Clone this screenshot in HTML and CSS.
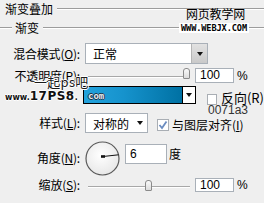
FILE: index.html
```html
<!DOCTYPE html>
<html>
<head>
<meta charset="utf-8">
<link rel="stylesheet" href="styles.css">
</head>
<body>
<div class="panel">
  <div class="title"><span class="title-text">渐变叠加</span><span class="rule"></span></div>
  <div class="legend"><span class="rule lead"></span><span class="legend-text">渐变</span><span class="rule"></span></div>

  <div class="row r-blend">
    <span class="label">混合模式(<u>O</u>):</span>
    <div class="select blend-select"><span class="select-val">正常</span><span class="drop gray"><span class="tri"></span></span></div>
  </div>

  <div class="row r-opacity">
    <span class="label">不透明度(<u>P</u>):</span>
    <div class="slider op-slider"><span class="track"></span><span class="thumb" style="left:95px"></span></div>
    <span class="num">100</span><span class="unit">%</span>
  </div>

  <div class="row r-grad">
    <span class="label"></span>
    <div class="gradbox"><span class="grad"></span><span class="drop white"><span class="tri"></span></span></div>
    <span class="check"></span><span class="ctext">反向(R)</span>
  </div>

  <div class="row r-style">
    <span class="label">样式(<u>L</u>):</span>
    <div class="select style-select"><span class="select-val">对称的</span><span class="drop plain"><span class="tri"></span></span></div>
    <span class="check checked"><svg width="10" height="10" viewBox="0 0 10 10"><path d="M1.5 5 L4 8 L8.5 1.5" fill="none" stroke="#6b8cc0" stroke-width="1.8"/></svg></span>
    <span class="ctext">与图层对齐(<u>I</u>)</span>
  </div>

  <div class="row r-angle">
    <span class="label">角度(<u>N</u>):</span>
    <svg class="dial" width="35" height="35" viewBox="0 0 35 35">
      <defs><radialGradient id="dg" cx="0.45" cy="0.4" r="0.7"><stop offset="0" stop-color="#ffffff"/><stop offset="1" stop-color="#e4e4e4"/></radialGradient></defs>
      <circle cx="17.5" cy="17.5" r="16.5" fill="url(#dg)" stroke="#5a5a5a" stroke-width="1.2"/>
      <line x1="18" y1="15.5" x2="33.5" y2="13.8" stroke="#111" stroke-width="1"/>
      <rect x="16" y="14.2" width="4" height="2.6" fill="#111"/>
    </svg>
    <span class="num angle-num">6</span><span class="unit deg">度</span>
  </div>

  <div class="row r-scale">
    <span class="label">缩放(<u>S</u>):</span>
    <div class="slider sc-slider"><span class="track"></span><span class="thumb" style="left:57px"></span></div>
    <span class="num">100</span><span class="unit">%</span>
  </div>

  <div class="wm wm-site">网页教学网</div>
  <div class="wm wm-url">WWW.WEBJX.COM</div>
  <div class="wm wm-ps">一起ps吧</div>
  <div class="wm wm-17"><span class="small">www.</span><span class="big">17PS8</span><span class="small">.</span></div>
  <div class="wm wm-com">com</div>
  <div class="wm wm-hex">0071a3</div>
</div>
</body>
</html>
```

FILE: styles.css
```css
html, body {
  margin: 0;
  padding: 0;
}
body {
  width: 264px;
  height: 203px;
  overflow: hidden;
  background: #efefef;
  font-family: "Noto Sans CJK SC", "DejaVu Sans", sans-serif;
  font-size: 12px;
  line-height: 14px;
  color: #000;
}
.panel {
  position: relative;
  width: 264px;
  height: 203px;
}
u { text-decoration: underline; text-underline-offset: 1px; }

.title {
  display: flex;
  align-items: center;
  height: 18px;
  padding-left: 5px;
}
.title-text { margin-right: 4px; }
.rule {
  flex: 1;
  height: 0;
  border-top: 1px solid #9c9c9c;
  border-bottom: 1px solid #ffffff;
}
.rule.lead { flex: 0 0 12px; }
.legend {
  display: flex;
  align-items: center;
  height: 18px;
  margin-top: 1px;
}
.legend-text { margin: 0 4px 0 3px; }

.row {
  display: flex;
  align-items: center;
}
.label {
  flex: 0 0 80px;
  text-align: right;
  white-space: nowrap;
  letter-spacing: -0.2px;
}
.r-blend { height: 21px; margin-top: 6px; }
.r-opacity { height: 15px; margin-top: 4px; }
.r-grad { height: 18px; margin-top: 3px; }
.r-style { height: 20px; margin-top: 9px; }
.r-angle { height: 34px; margin-top: 8px; }
.r-scale { height: 14px; margin-top: 3px; }

.select {
  display: flex;
  height: 100%;
  margin-left: 5px;
  background: #fff;
  border: 1px solid #a9b0b8;
  box-sizing: border-box;
}
.select-val {
  flex: 1;
  padding-left: 7px;
  line-height: 19px;
}
.blend-select { width: 123px; }
.style-select { width: 63px; }
.drop {
  flex: 0 0 15px;
  display: flex;
  align-items: center;
  justify-content: center;
}
.drop.gray {
  background: linear-gradient(#e2e2e2, #c9c9c9);
  border-left: 1px solid #b5b5b5;
}
.drop.plain { background: #fff; }
.drop.white {
  flex: 0 0 12px;
  background: #fff;
  border-left: 1px solid #000;
}
.tri {
  width: 0;
  height: 0;
  border-left: 3px solid transparent;
  border-right: 3px solid transparent;
  border-top: 4px solid #111;
}

.slider {
  position: relative;
  height: 100%;
  margin-left: 8px;
  width: 104px;
}
.track {
  position: absolute;
  left: 0;
  right: 2px;
  top: 8px;
  height: 1px;
  background: #a8a8a8;
  border-bottom: 1px solid #fff;
}
.thumb {
  position: absolute;
  top: 0;
  width: 7px;
  height: 11px;
  box-sizing: border-box;
  border: 1px solid #8a8a8a;
  border-radius: 3px 3px 1px 1px;
  background: linear-gradient(#fafafa, #dcdcdc);
}
.sc-slider .track { top: 8px; }
.sc-slider .thumb { top: 2px; }

.num {
  box-sizing: border-box;
  width: 39px;
  height: 15px;
  margin-left: 3px;
  background: #fff;
  border: 1px solid #a9b0b8;
  padding-left: 4px;
  line-height: 13px;
  font-family: "Liberation Sans", sans-serif;
  font-size: 12px;
}
.r-scale .num { height: 14px; line-height: 12px; }
.unit {
  margin-left: 3px;
  font-family: "Liberation Sans", sans-serif;
}

.gradbox {
  display: flex;
  margin-left: 3px;
  width: 124px;
  height: 18px;
  box-sizing: border-box;
  border: 1px solid #000;
}
.grad {
  flex: 1;
  background: linear-gradient(90deg, #23a2dc 0%, #1693cd 40%, #0071a3 100%);
}
.check {
  box-sizing: border-box;
  width: 11px;
  height: 11px;
  background: #fff;
  border: 1px solid #a9aeb4;
  display: flex;
  align-items: center;
  justify-content: center;
}
.r-grad .check { margin-left: 11px; margin-top: 9px; }
.r-grad .ctext { margin-left: 4px; margin-top: 6px; white-space: nowrap; font-size: 13px; }
.r-style .check { margin-left: 9px; width: 12px; height: 12px; margin-top: 4px; }
.r-style .ctext { margin-left: 3px; margin-top: 4px; white-space: nowrap; }

.dial { margin-left: 5px; }
.angle-num {
  height: 20px;
  width: 42px;
  margin-left: 5px;
  margin-top: -9px;
  line-height: 18px;
}
.deg { margin-left: 2px; margin-top: -9px; font-family: "Noto Sans CJK SC", sans-serif; }

.wm {
  position: absolute;
  white-space: nowrap;
}
.wm-site {
  left: 186px;
  top: 6px;
  font-size: 12px;
  line-height: 16px;
  letter-spacing: -0.2px;
}
.wm-url {
  left: 179px;
  top: 23px;
  padding: 0 2px;
  background: #fff;
  font-family: "DejaVu Sans Mono", monospace;
  font-weight: bold;
  font-size: 8.6px;
  line-height: 10px;
  letter-spacing: -0.1px;
}
.wm-ps {
  left: 34px;
  top: 74px;
  font-size: 13px;
  line-height: 15px;
  color: #1a1a1a;
  letter-spacing: 0.3px;
  text-shadow: 1px 0 #fff, -1px 0 #fff, 0 1px #fff, 0 -1px #fff;
}
.wm-17 {
  left: 5px;
  top: 89px;
  font-family: "DejaVu Sans", sans-serif;
  font-weight: bold;
  color: #111;
  line-height: 14px;
  text-shadow: 1px 0 #fff, -1px 0 #fff, 0 1px #fff, 0 -1px #fff;
}
.wm-17 .small { font-size: 8px; }
.wm-17 .big { font-size: 12px; letter-spacing: 0.5px; }
.wm-com {
  left: 88px;
  top: 89px;
  font-family: "DejaVu Sans Mono", monospace;
  font-weight: bold;
  font-size: 9px;
  line-height: 14px;
  color: #e3eef5;
  text-shadow: 1px 0 #234, -1px 0 #234, 0 1px #234, 0 -1px #234;
}
.wm-hex {
  left: 208px;
  top: 103px;
  font-family: "Liberation Sans", sans-serif;
  font-size: 12px;
  line-height: 14px;
  color: #333;
}
```
